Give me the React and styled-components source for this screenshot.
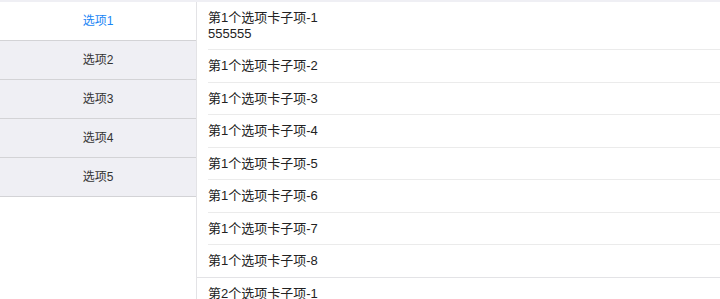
import React, { useState } from 'react';
import styled, { createGlobalStyle } from 'styled-components';

const GlobalStyle = createGlobalStyle`
  html, body {
    margin: 0;
    padding: 0;
    height: 299px;
    overflow: hidden;
    background-color: #ffffff;
    font-family: "Liberation Sans", "Noto Sans CJK SC", sans-serif;
    color: #333333;
  }
`;

const Page = styled.div`
  display: flex;
  height: 299px;
  border-top: 2px solid #efeff4;
  box-sizing: border-box;
`;

const Sidebar = styled.div`
  width: 196px;
  flex-shrink: 0;
  border-right: 1px solid #e3e3e6;
  display: flex;
  flex-direction: column;
`;

const Tab = styled.div`
  height: 38px;
  line-height: 38px;
  text-align: center;
  font-size: 12px;
  border-bottom: 1px solid #d3d3d6;
  background-color: ${(p) => (p.$active ? '#ffffff' : '#efeff4')};
  color: ${(p) => (p.$active ? '#1a85f5' : '#333333')};
  cursor: pointer;
`;

const Content = styled.div`
  flex: 1;
  overflow: hidden;
`;

const Group = styled.div`
  border-bottom: 1px solid #e3e3e6;
`;

const Item = styled.div`
  margin-left: 11px;
  padding: 7px 0 7.5px;
  font-size: 13px;
  line-height: 17px;
  color: #222222;
  border-bottom: 1px solid #ebebeb;

  &:last-child {
    border-bottom: none;
  }
`;

const Note = styled.div`
  line-height: 15.5px;
`;

const tabs = ['选项1', '选项2', '选项3', '选项4', '选项5'];

const groups = [1, 2].map((g) =>
  Array.from({ length: 8 }, (_, i) => ({
    title: `第${g}个选项卡子项-${i + 1}`,
    note: g === 1 && i === 0 ? '555555' : null,
  }))
);

const App = () => {
  const [active, setActive] = useState(0);

  return (
    <>
      <GlobalStyle />
      <Page>
        <Sidebar>
          {tabs.map((t, i) => (
            <Tab key={t} $active={i === active} onClick={() => setActive(i)}>
              {t}
            </Tab>
          ))}
        </Sidebar>
        <Content>
          {groups.map((items, g) => (
            <Group key={g}>
              {items.map((it) => (
                <Item key={it.title}>
                  {it.title}
                  {it.note && <Note>{it.note}</Note>}
                </Item>
              ))}
            </Group>
          ))}
        </Content>
      </Page>
    </>
  );
};

export default App;
